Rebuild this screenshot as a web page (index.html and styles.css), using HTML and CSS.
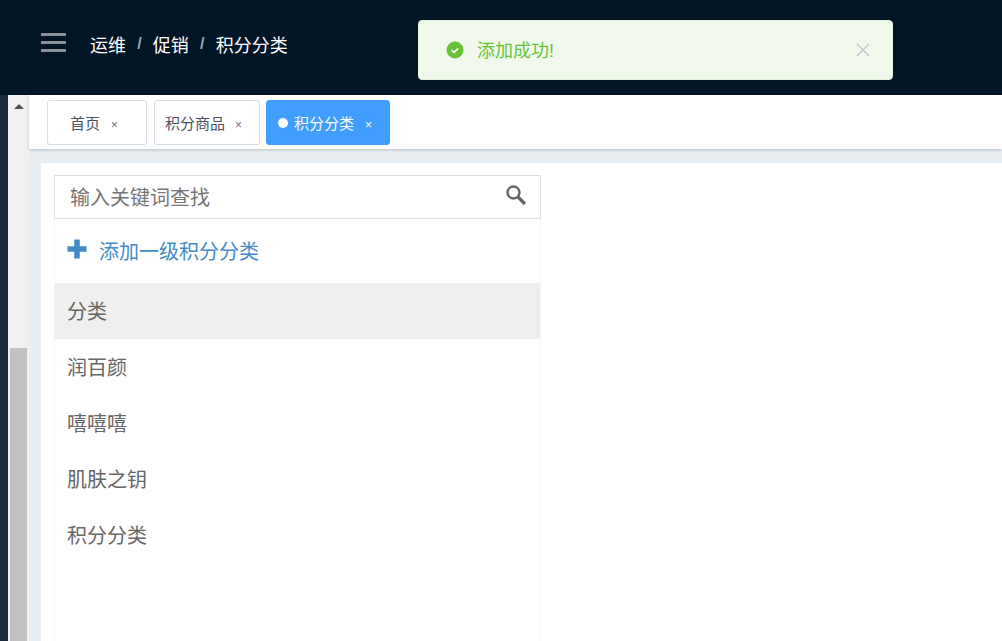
FILE: index.html
```html
<!DOCTYPE html>
<html>
<head>
    <meta charset="utf-8">
    <title>积分分类</title>
    <link rel="stylesheet" href="styles.css">
</head>
<body>
    <header class="navbar">
        <svg class="hamburger" width="26" height="19" viewBox="0 0 26 19">
            <rect x="0" y="0" width="25" height="3" fill="#8a8f99"/>
            <rect x="0" y="8" width="25" height="3" fill="#8a8f99"/>
            <rect x="0" y="16" width="25" height="3" fill="#8a8f99"/>
        </svg>
        <div class="breadcrumb">
            <span>运维</span><i>/</i><span>促销</span><i>/</i><span>积分分类</span>
        </div>
    </header>

    <div class="message">
        <svg class="message-icon" width="18" height="18" viewBox="0 0 18 18">
            <circle cx="9" cy="9" r="8.5" fill="#67c23a"/>
            <path d="M5.6 9.2l2.4 2.2 4.2-4" fill="none" stroke="#fff" stroke-width="1.6"/>
        </svg>
        <span class="message-text">添加成功!</span>
        <svg class="message-close" width="14" height="14" viewBox="0 0 14 14">
            <path d="M1 1l12 12M13 1L1 13" stroke="#c0c4cc" stroke-width="1.3" fill="none"/>
        </svg>
    </div>

    <div class="main">
        <aside class="sidebar">
            <div class="scroll">
                <div class="scroll-arrow"></div>
                <div class="scroll-thumb"></div>
            </div>
        </aside>
        <div class="content">
            <nav class="tags">
                <a class="tag">首页<b>×</b></a>
                <a class="tag tag-mid">积分商品<b>×</b></a>
                <a class="tag tag-active"><em></em>积分分类<b>×</b></a>
            </nav>
            <div class="page">
                <div class="card">
                    <div class="tree">
                        <div class="search">
                            <span>输入关键词查找</span>
                            <svg width="22" height="22" viewBox="0 0 22 22">
                                <circle cx="8.5" cy="8.5" r="6" fill="none" stroke="#666" stroke-width="2.4"/>
                                <path d="M13 13l7 7" stroke="#666" stroke-width="3.2"/>
                            </svg>
                        </div>
                        <div class="add-row">
                            <svg width="20" height="20" viewBox="0 0 20 20">
                                <path d="M10 0.500v19M0.500 10h19" stroke="#428bca" stroke-width="5.500"/>
                            </svg>
                            <span>添加一级积分分类</span>
                        </div>
                        <div class="row row-active">分类</div>
                        <div class="row">润百颜</div>
                        <div class="row">嘻嘻嘻</div>
                        <div class="row">肌肤之钥</div>
                        <div class="row">积分分类</div>
                    </div>
                </div>
            </div>
        </div>
    </div>
</body>
</html>
```

FILE: styles.css
```css
html, body {
    height: 100%;
}
body {
    margin: 0;
    overflow: hidden;
    font-family: "Liberation Sans", "Noto Sans CJK SC", sans-serif;
    background-color: #fff;
}
/* Top bar */
.navbar {
    display: flex;
    align-items: center;
    height: 95px;
    padding: 0 0 7px 41px;
    box-sizing: border-box;
    background-color: #021527;
}
.hamburger {
    margin-right: 23px;
    margin-bottom: 3px;
}
.breadcrumb {
    display: flex;
    align-items: center;
    color: #fff;
    font-size: 18px;
}
.breadcrumb i {
    margin: 0 11.2px;
    font-style: normal;
    color: #97a8be;
    font-weight: bold;
    font-size: 16px;
}
/* Toast */
.message {
    position: fixed;
    top: 20px;
    left: 418px;
    width: 475px;
    height: 60px;
    display: flex;
    align-items: center;
    padding: 0 22px 1px 27px;
    box-sizing: border-box;
    background-color: #f0f9eb;
    border: 1px solid #e1f3d8;
    border-radius: 4px;
}
.message-icon {
    margin-right: 13px;
}
.message-text {
    flex: 1;
    padding-bottom: 2px;
    font-size: 18px;
    color: #67c23a;
}
/* Layout */
.main {
    display: flex;
    height: 546px;
}
.sidebar {
    width: 29px;
    flex: none;
    padding-left: 8px;
    box-sizing: border-box;
    background: linear-gradient(to right, #1b2a3f 8px, transparent 8px);
}
.scroll {
    width: 21px;
    height: 100%;
    background-color: #f1f1f1;
    display: flex;
    flex-direction: column;
    align-items: center;
}
.scroll-arrow {
    margin-top: 9px;
    border-left: 5px solid transparent;
    border-right: 5px solid transparent;
    border-bottom: 5px solid #505050;
}
.scroll-thumb {
    margin-top: 239px;
    width: 17px;
    flex: 1;
    background-color: #c1c1c1;
}
.content {
    flex: 1;
    display: flex;
    flex-direction: column;
    min-width: 0;
    background-color: #e9eef3;
}
/* Tag strip */
.tags {
    display: flex;
    gap: 7px;
    height: 54px;
    padding: 5px 0 0 18px;
    box-sizing: border-box;
    background-color: #fff;
    box-shadow: 0 1px 3px rgba(0, 0, 0, 0.2);
}
.tag {
    display: flex;
    align-items: center;
    width: 100px;
    height: 45px;
    padding-left: 22px;
    box-sizing: border-box;
    border: 1px solid #d8dce5;
    border-radius: 3px;
    background-color: #fff;
    color: #495060;
    font-size: 15px;
}
.tag b {
    margin-left: 11px;
    font-weight: normal;
    font-size: 12px;
    color: #777;
    position: relative;
    top: 2px;
}
.tag-mid {
    width: 106px;
    margin-right: -1px;
    padding-left: 10px;
}
.tag-mid b {
    margin-left: 10px;
}
.tag-active {
    width: 124px;
    padding-left: 11px;
    background-color: #409eff;
    border-color: #409eff;
    color: #fff;
}
.tag-active b {
    color: #fff;
}
.tag-active em {
    width: 10px;
    height: 10px;
    margin-right: 6px;
    border-radius: 50%;
    background-color: #fff;
}
/* Category panel */
.page {
    flex: 1;
    padding: 14px 0 0 12px;
    min-height: 0;
}
.card {
    height: 100%;
    padding: 12px 0 0 13px;
    box-sizing: border-box;
    background-color: #fff;
}
.tree {
    width: 487px;
    height: 100%;
    box-sizing: border-box;
    border-right: 1px solid #f5f6f8;
    border-left: 1px solid #f5f6f8;
}
.search {
    display: flex;
    align-items: center;
    justify-content: space-between;
    height: 44px;
    margin-left: -1px;
    margin-right: -1px;
    padding: 0 13px 4px 15px;
    box-sizing: border-box;
    border: 1px solid #dcdfe6;
    font-size: 20px;
    color: #757575;
}
.search span {
    padding-top: 2px;
}
.add-row {
    display: flex;
    align-items: center;
    gap: 12px;
    height: 64px;
    padding: 0 0 2px 12px;
    box-sizing: border-box;
    font-size: 20px;
    color: #428bca;
}
.add-row svg {
    margin-bottom: 2px;
}
.row {
    height: 56px;
    line-height: 58px;
    padding-left: 12px;
    font-size: 20px;
    color: #666;
}
.row-active {
    background-color: #efefef;
}
```
